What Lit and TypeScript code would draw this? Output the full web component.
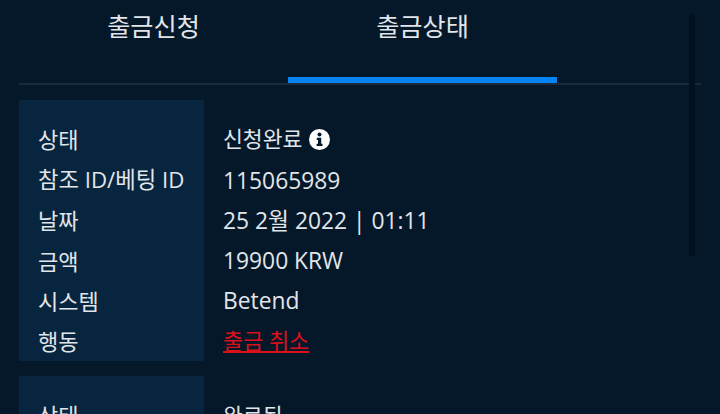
import { LitElement, html, css } from "lit";
import { customElement } from "lit/decorators.js";

const rows1: [string, string][] = [
  ["참조 ID/베팅 ID", "115065989"],
  ["날짜", "25 2월 2022 | 01:11"],
  ["금액", "19900 KRW"],
  ["시스템", "Betend"],
];

@customElement("app-root")
export class AppRoot extends LitElement {
  static styles = css`
    :host {
      display: block;
      width: 720px;
      height: 414px;
      overflow: hidden;
      position: relative;
      background: #041829;
      color: #e2e5e9;
      font-family: "Open Sans", "Noto Sans CJK KR", sans-serif;
      font-size: 22px;
    }
    .tabs {
      display: grid;
      grid-template-columns: 269px 269px;
      margin: 0 19px;
      width: 682px;
      height: 85px;
      box-sizing: border-box;
      border-bottom: 2px solid #1b2a3b;
    }
    .tab {
      font-size: 25.2px;
      line-height: 53px;
      text-align: center;
      height: 83px;
      box-sizing: border-box;
      color: #e2e5e9;
    }
    .tab.active {
      border-bottom: 6px solid #0684f4;
    }
    .card {
      display: grid;
      grid-template-columns: 185px 1fr;
      margin: 15px 19px 0;
    }
    .labels {
      background: #07253f;
      padding: 20px 0 0 19px;
    }
    .values {
      padding: 20.4px 0 0 19px;
      margin-bottom: -0.4px;
    }
    .row {
      height: 40.2px;
      line-height: 40.2px;
      white-space: nowrap;
      display: flex;
      align-items: center;
      gap: 7px;
    }
    .first {
      margin-top: -1px;
      margin-bottom: 1px;
    }
    .values .row.latin {
      font-size: 22.8px;
    }
    .labels .row.latin {
      font-size: 22.25px;
    }
    a {
      color: #dc101a;
      font-size: 21.9px;
      text-decoration: underline;
    }
    .status {
      font-size: 21.6px;
    }
    .info {
      width: 21px;
      height: 21px;
      display: block;
    }
    .scroll {
      position: absolute;
      left: 689px;
      top: 14px;
      width: 6px;
      height: 242px;
      background: #02111f;
    }
  `;

  render() {
    return html`
      <div class="tabs">
        <div class="tab">출금신청</div>
        <div class="tab active">출금상태</div>
      </div>
      <div class="card">
        <div class="labels">
          <div class="row first">상태</div>
          ${rows1.map((r, i) => html`<div class="row ${i === 0 ? "latin" : ""}">${r[0]}</div>`)}
          <div class="row">행동</div>
        </div>
        <div class="values">
          <div class="row first status">
            신청완료
            <svg class="info" viewBox="0 0 21 21">
              <circle cx="10.5" cy="10.5" r="10.5" fill="#fff"></circle>
              <circle cx="10.5" cy="5.6" r="2" fill="#041829"></circle>
              <path d="M7.8 8.8h4.4v6h1.3v2.2H7.6v-2.2h1.4v-3.8H7.8z" fill="#041829"></path>
            </svg>
          </div>
          ${rows1.map((r) => html`<div class="row latin">${r[1]}</div>`)}
          <div class="row"><a>출금 취소</a></div>
        </div>
      </div>
      <div class="card">
        <div class="labels"><div class="row first">상태</div></div>
        <div class="values"><div class="row first status">완료됨</div></div>
      </div>
      <div class="scroll"></div>
    `;
  }
}
